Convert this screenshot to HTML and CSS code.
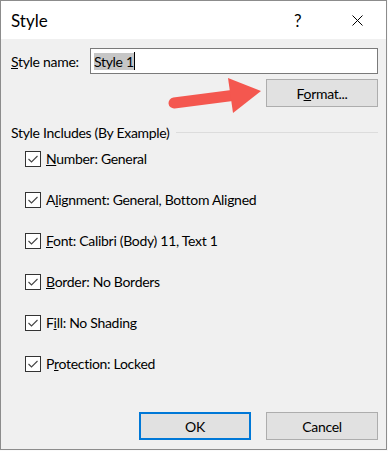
FILE: index.html
```html
<!DOCTYPE html>
<html lang="en">
<head>
    <meta charset="UTF-8">
    <title>Style</title>
    <link rel="stylesheet" href="styles.css">
</head>
<body>
    <div class="dialog">
        <div class="titlebar">
            <span class="title">Style</span>
            <span class="help">?</span>
            <span class="close">
                <svg width="11" height="11" viewBox="0 0 11 11">
                    <path d="M0.5 0.5 L10.5 10.5 M10.5 0.5 L0.5 10.5" stroke="#000" stroke-width="1" fill="none"/>
                </svg>
            </span>
        </div>

        <div class="content">
            <div class="name-row">
                <label class="label"><u>S</u>tyle name:</label>
                <div class="textbox"><span class="selected">Style 1</span><span class="caret"></span></div>
            </div>

            <div class="format-row">
                <button class="btn">F<u>o</u>rmat...</button>
            </div>

            <div class="group-head">
                <span>Style Includes (By Example)</span>
                <div class="rule"></div>
            </div>

            <div class="checks">
                <div class="check"><span class="box"></span><span><u>N</u>umber: General</span></div>
                <div class="check"><span class="box"></span><span>A<u>l</u>ignment: General, Bottom Aligned</span></div>
                <div class="check"><span class="box"></span><span><u>F</u>ont: Calibri (Body) 11, Text 1</span></div>
                <div class="check"><span class="box"></span><span><u>B</u>order: No Borders</span></div>
                <div class="check"><span class="box"></span><span>F<u>i</u>ll: No Shading</span></div>
                <div class="check"><span class="box"></span><span>P<u>r</u>otection: Locked</span></div>
            </div>

            <div class="buttons">
                <button class="btn default">OK</button>
                <button class="btn">Cancel</button>
            </div>
        </div>

        <!-- annotation arrow pointing at the Format button -->
        <svg class="arrow" width="110" height="50" viewBox="0 0 110 50">
            <path d="M14 33 L76 25" stroke="#f4574f" stroke-width="11" stroke-linecap="round" fill="none"/>
            <polygon points="68,8 101,21 73,43" fill="#f4574f"/>
        </svg>
    </div>
</body>
</html>
```

FILE: styles.css
```css
body {
    margin: 0;
    background: #fafafa;
    font-family: Lato, "Noto Sans", sans-serif;
    font-size: 14px;
    letter-spacing: -0.3px;
    color: #000;
}
.dialog {
    position: relative;
    width: 385px;
    height: 448px;
    border: 1px solid #8c8c8c;
    background: #f0f0f0;
    display: flex;
    flex-direction: column;
}
.titlebar {
    height: 38px;
    background: #fff;
    display: flex;
    align-items: center;
    letter-spacing: 0;
}
.title {
    font-size: 17px;
    padding-left: 10px;
    flex: 1;
}
.help {
    font-size: 17px;
    width: 10px;
    margin-right: 48px;
}
.close {
    width: 11px;
    height: 11px;
    margin-right: 23px;
    display: flex;
}
.content {
    flex: 1;
    display: flex;
    flex-direction: column;
    padding: 9px 8px 0 10px;
}
.name-row {
    display: flex;
    align-items: center;
}
.label {
    width: 79px;
}
.textbox {
    flex: 1;
    height: 24px;
    border: 1px solid #7a7a7a;
    background: #fff;
    display: flex;
    align-items: center;
    padding-left: 3px;
}
.selected {
    background: #c6c6c6;
    line-height: 17px;
}
.caret {
    width: 1px;
    height: 18px;
    background: #000;
}
.format-row {
    display: flex;
    justify-content: flex-end;
    margin-top: 5px;
}
.arrow {
    position: absolute;
    left: 159px;
    top: 69px;
}
.btn {
    width: 112px;
    height: 28px;
    border: 1px solid #adadad;
    background: #e1e1e1;
    font-family: inherit;
    font-size: 14px;
    letter-spacing: inherit;
    color: #000;
    padding: 0;
}
.btn.default {
    border: 2px solid #0078d7;
}
.group-head {
    display: flex;
    align-items: center;
    height: 19px;
    margin-top: 16px;
}
.rule {
    flex: 1;
    height: 1px;
    background: #dcdcdc;
    margin-left: 6px;
}
.checks {
    display: flex;
    flex-direction: column;
    gap: 22px;
    margin-top: 7px;
    padding-left: 14px;
}
.check {
    display: flex;
    align-items: center;
    gap: 5px;
    height: 19px;
}
.box {
    width: 14px;
    height: 14px;
    border: 1px solid #333;
    background: #fff url("data:image/svg+xml;utf8,<svg xmlns='http://www.w3.org/2000/svg' width='14' height='14'><path d='M2.5 7 L5.5 10 L11.5 4' stroke='%23444' stroke-width='1.1' fill='none'/></svg>") no-repeat center;
}
.buttons {
    display: flex;
    justify-content: flex-end;
    gap: 15px;
    margin-top: auto;
    margin-bottom: 9px;
}
```
